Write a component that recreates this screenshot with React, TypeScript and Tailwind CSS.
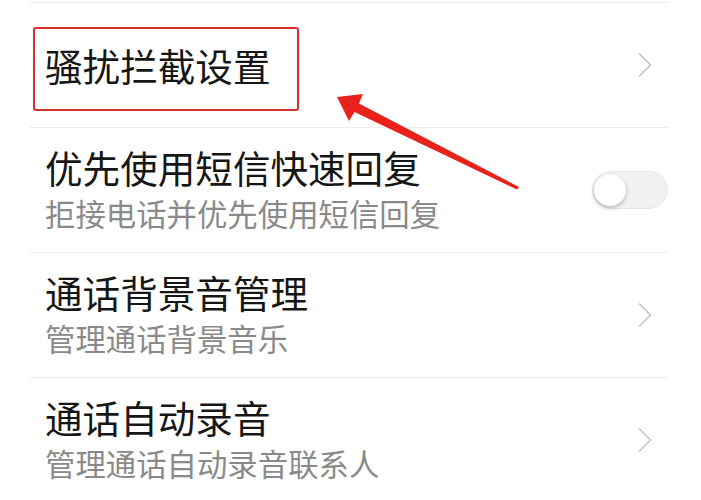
import React from "react";

type Row = {
  title: string;
  sub?: string;
  kind: "link" | "toggle";
};

const rows: Row[] = [
  { title: "骚扰拦截设置", kind: "link" },
  { title: "优先使用短信快速回复", sub: "拒接电话并优先使用短信回复", kind: "toggle" },
  { title: "通话背景音管理", sub: "管理通话背景音乐", kind: "link" },
  { title: "通话自动录音", sub: "管理通话自动录音联系人", kind: "link" },
];

function Chevron() {
  return (
    <svg width="16" height="26" viewBox="0 0 16 26" className="shrink-0">
      <path d="M2 1.5 L13.5 13 L2 24.5" fill="none" stroke="#c4c4c4" strokeWidth="1.6" />
    </svg>
  );
}

function Toggle() {
  return (
    <div className="relative h-[38px] w-[76px] shrink-0 rounded-full border border-[#e6e6e6] bg-[#f1f1f1]">
      <div className="absolute left-[1px] top-[2px] h-[32px] w-[32px] rounded-full bg-white shadow-[0_2px_4px_rgba(0,0,0,0.25)]" />
    </div>
  );
}

export default function App() {
  return (
    <div
      className="relative h-[500px] w-[701px] overflow-hidden bg-white"
      style={{ fontFamily: '"Noto Sans CJK SC", "Noto Sans", sans-serif' }}
    >
      <div className="h-[2px]" />
      <div className="ml-[30px] mr-[33px] border-t border-[#ececec]">
        {rows.map((r) => (
          <div
            key={r.title}
            className="flex h-[125px] items-center justify-between border-b border-[#ececec] pl-[15px] pr-[15px]"
          >
            <div className="flex flex-col">
              <span className="text-[37.6px] leading-[46px] text-[#161616]">{r.title}</span>
              {r.sub && <span className="text-[30.4px] leading-[46px] text-[#8a8a8a]">{r.sub}</span>}
            </div>
            {r.kind === "link" ? <Chevron /> : <div className="-mr-[15px]"><Toggle /></div>}
          </div>
        ))}
      </div>

      {/* annotation */}
      <div className="absolute left-[33px] top-[27px] h-[84px] w-[266px] rounded-[3px] border-2 border-[#d8302c]" />
      <svg className="absolute left-0 top-0" width="701" height="500" viewBox="0 0 701 500">
        <polygon
          points="337,97 363,94 359,103.5 519,187 517,189.5 354.5,112 349,121"
          fill="#e8221a"
        />
      </svg>
    </div>
  );
}
